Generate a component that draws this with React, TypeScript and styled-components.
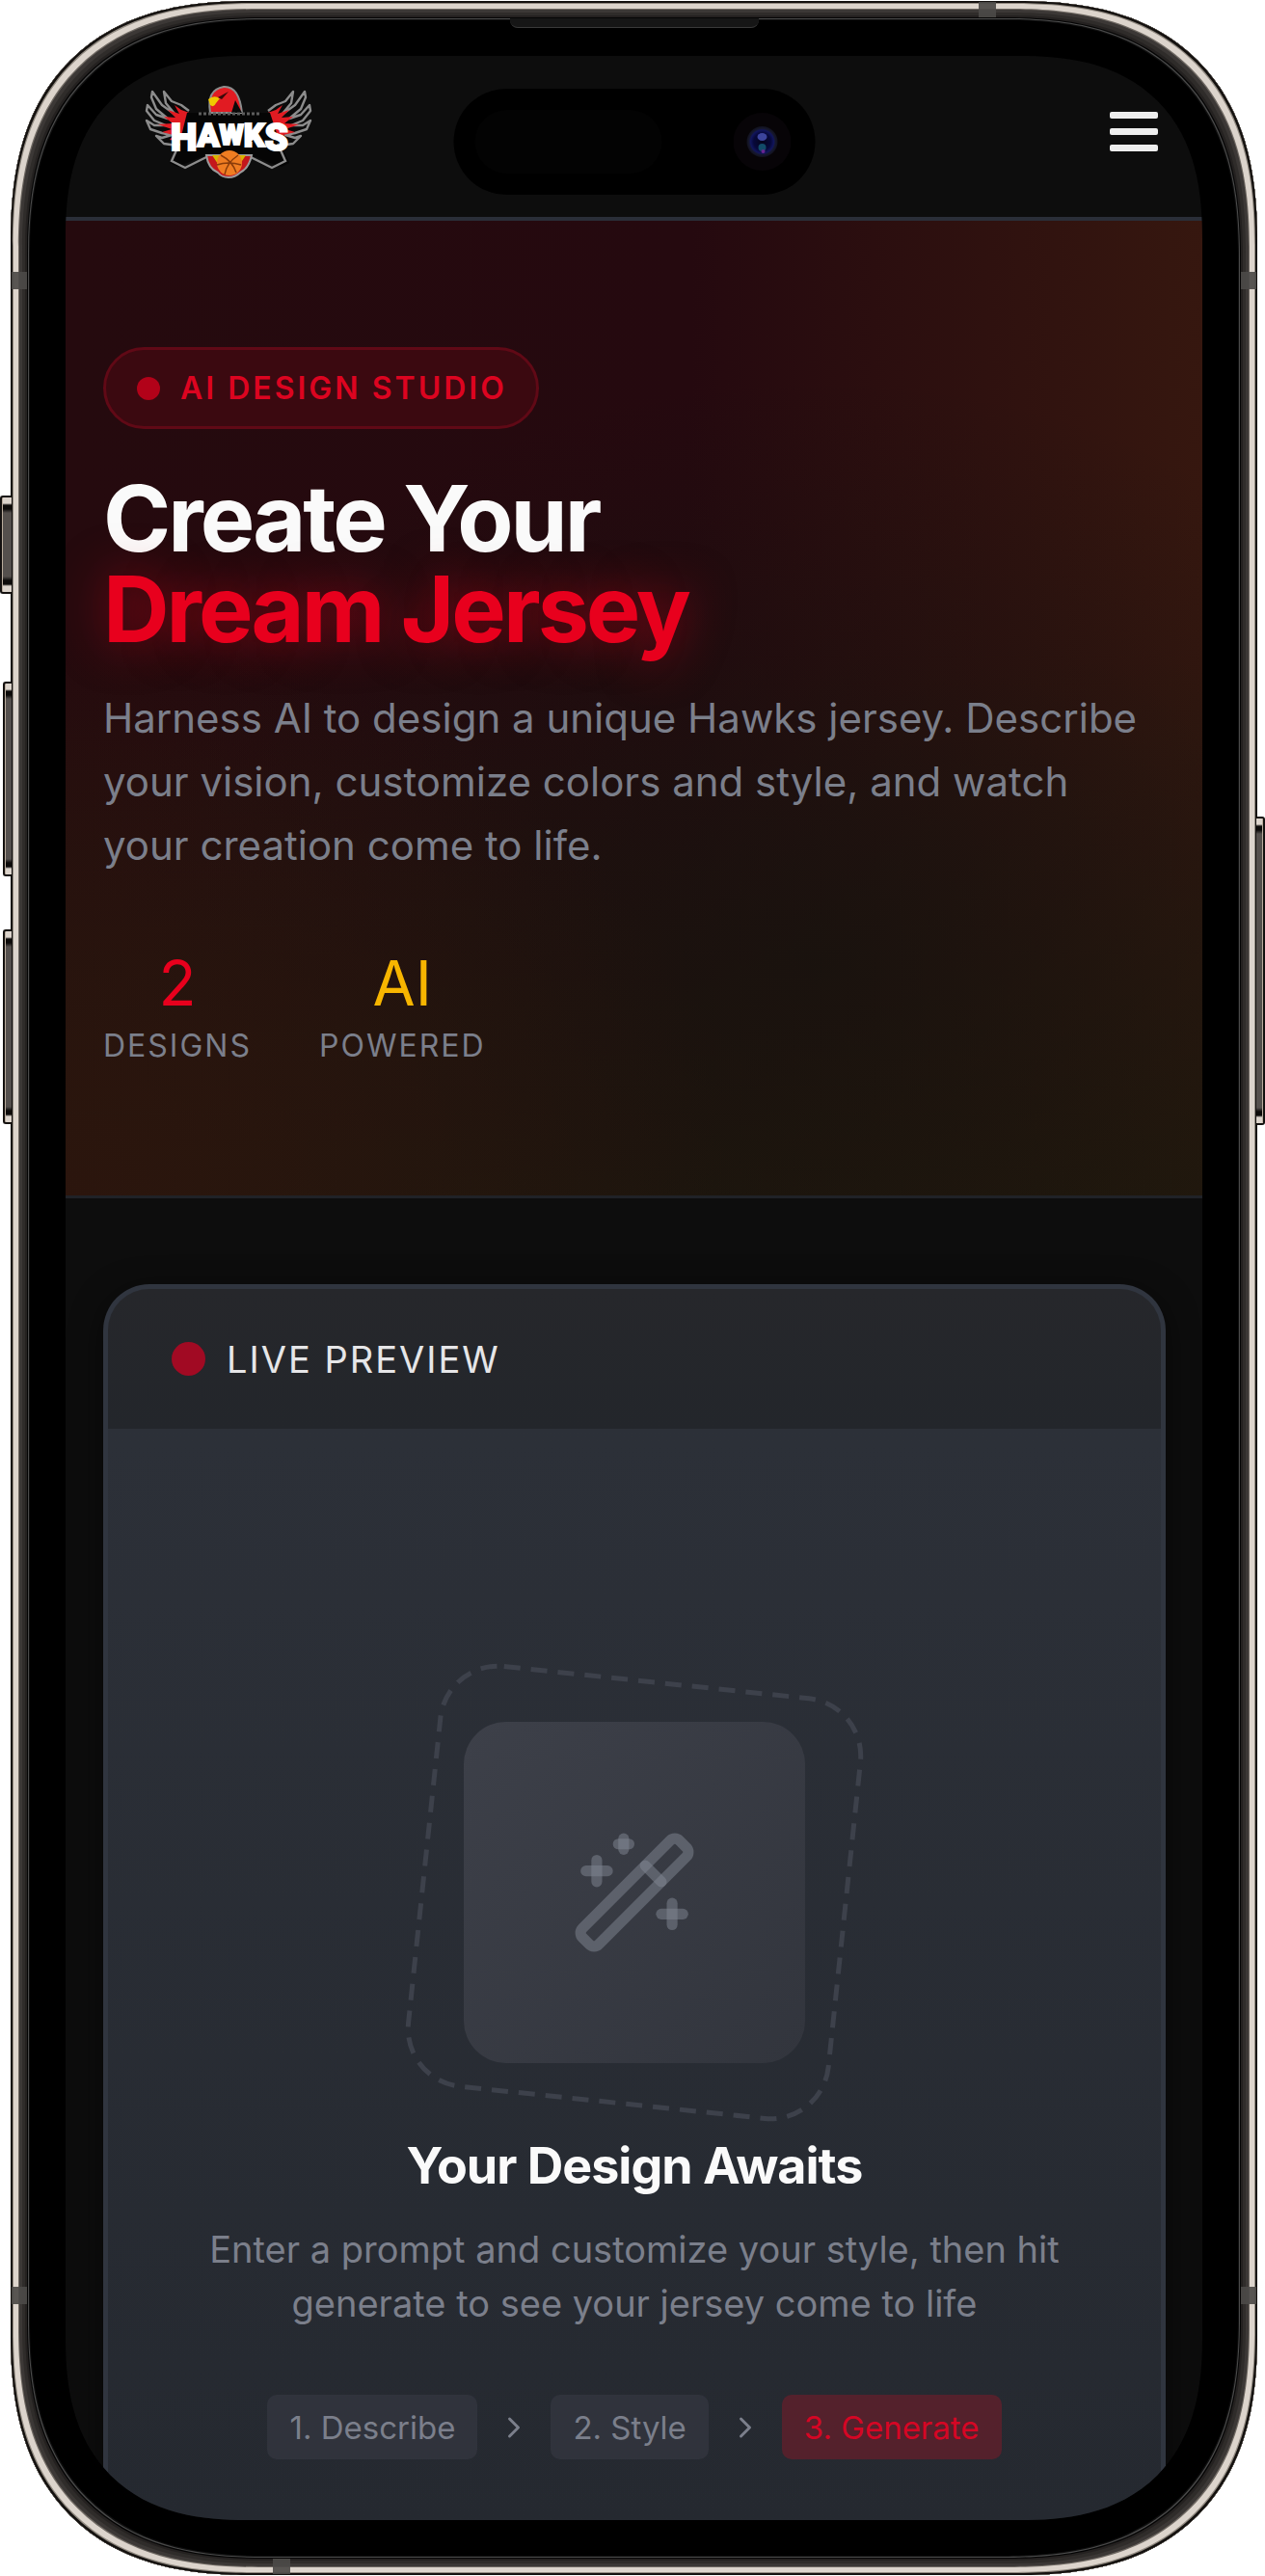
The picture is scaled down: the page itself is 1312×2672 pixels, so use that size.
import React from 'react';
import styled, { createGlobalStyle } from 'styled-components';

const GlobalStyle = createGlobalStyle`
  *, *::before, *::after { box-sizing: border-box; }
  body {
    margin: 0;
    background: #ffffff;
    font-family: Inter, "Liberation Sans", sans-serif;
    -webkit-font-smoothing: antialiased;
  }
  h1, h2, h3, p, ol { margin: 0; padding: 0; }
`;

const color = {
  bg: '#0d0d0d',
  red: '#e8001d',
  gold: '#f7b500',
  muted: '#7b7f8b',
  line: '#2a2e38',
};

/* ---------- Device shell ---------- */

const Stage = styled.div`
  padding: 1px 8px 1px 11px;
`;

const Device = styled.div`
  position: relative;
  padding: 57px;
  background: #000000;
  border-radius: 218px;
  box-shadow:
    inset 0 0 0 2px #14110f,
    inset 0 0 0 3px #8f887f,
    inset 0 0 0 8px #dcd4cc,
    inset 0 0 0 9px #6e6862,
    inset 0 0 0 12px #3c3836,
    inset 0 0 0 15px #2f2c2a,
    inset 0 0 0 17px #242120,
    inset 0 0 0 18px #050505,
    inset 0 0 0 19px #4a4a4a,
    inset 0 0 0 20px #101010;
  @supports (corner-shape: superellipse(1.3)) {
    border-radius: 252px;
    corner-shape: superellipse(1.3);
  }
`;

const Screen = styled.div`
  position: relative;
  overflow: hidden;
  background: ${color.bg};
  border-radius: 162px;
  @supports (corner-shape: superellipse(1.3)) {
    border-radius: 190px;
    corner-shape: superellipse(1.3);
  }
`;

const SideKey = styled.span<{ $side: 'left' | 'right'; $top: number; $height: number; $depth: number }>`
  position: absolute;
  ${(p) => p.$side}: ${(p) => -p.$depth}px;
  top: ${(p) => p.$top}px;
  width: ${(p) => p.$depth + 1}px;
  height: ${(p) => p.$height}px;
  border: 2px solid #14110f;
  border-${(p) => (p.$side === 'left' ? 'right' : 'left')}: 0;
  border-radius: ${(p) => (p.$side === 'left' ? '3px 0 0 3px' : '0 3px 3px 0')};
  background: linear-gradient(
    to bottom,
    #dcd4cc 0 6px, #0c0a09 8px 12px, #55504d 16px,
    #55504d calc(100% - 16px), #0c0a09 calc(100% - 12px) calc(100% - 8px), #dcd4cc calc(100% - 6px)
  );
  box-shadow: inset ${(p) => (p.$side === 'left' ? 1 : -1)}px 0 0 #b9ab9c;
`;

const Antenna = styled.span<{ $edge: 'top' | 'bottom' | 'left' | 'right'; $at: string }>`
  position: absolute;
  background: rgba(76, 74, 72, 0.92);
  ${(p) =>
    p.$edge === 'top' || p.$edge === 'bottom'
      ? `${p.$edge}: 1px; left: ${p.$at}; width: 18px; height: 16px;`
      : `${p.$edge}: 1px; top: ${p.$at}; width: 16px; height: 18px;`}
`;

const Speaker = styled.span`
  position: absolute;
  top: 18px;
  left: 50%;
  width: 258px;
  height: 10px;
  transform: translateX(-50%);
  background: #161616;
  border-bottom: 1px solid #3a3a3a;
  border-radius: 0 0 8px 8px;
`;

const Island = styled.div`
  position: absolute;
  z-index: 2;
  top: 34px;
  left: 50%;
  transform: translateX(-50%);
  display: flex;
  align-items: center;
  justify-content: space-between;
  width: 375px;
  height: 110px;
  padding: 0 25px 0 22px;
  border-radius: 55px;
  background: #000000;
`;

const Sensor = styled.span`
  width: 194px;
  height: 66px;
  border-radius: 33px;
  background: #030303;
`;

/* ---------- Top bar ---------- */

const TopBar = styled.header`
  display: flex;
  align-items: center;
  justify-content: space-between;
  padding: 29px 46px 40px 80px;
  border-bottom: 4px solid ${color.line};
`;

const LogoLink = styled.a`
  display: block;
  line-height: 0;
`;

const MenuButton = styled.button`
  display: flex;
  flex-direction: column;
  gap: 10px;
  padding: 0;
  border: 0;
  background: none;
  cursor: pointer;
`;

const MenuBar = styled.span`
  width: 50px;
  height: 7px;
  border-radius: 2px;
  background: #ededed;
`;

/* ---------- Hero ---------- */

const Hero = styled.section`
  padding: 131px 39px;
  border-bottom: 3px solid #202227;
  background:
    radial-gradient(ellipse 58% 58% at 0% 100%, rgba(44, 21, 13, 0.95), rgba(44, 21, 13, 0) 100%),
    radial-gradient(ellipse 62% 60% at 66% 76%, rgba(22, 18, 14, 0.75), rgba(22, 18, 14, 0) 100%),
    linear-gradient(to bottom, rgba(32, 26, 13, 0) 45%, rgba(32, 26, 13, 0.85) 100%),
    linear-gradient(to right, #250a0e 0%, #25090f 55%, #36170f 100%);
`;

const Badge = styled.div`
  display: flex;
  align-items: center;
  gap: 21px;
  width: fit-content;
  height: 85px;
  padding: 0 30px 0 32px;
  border: 3px solid #600916;
  border-radius: 43px;
  background: #3b0910;
  color: #dc0420;
  font-size: 32px;
  font-weight: 600;
  letter-spacing: 3px;
`;

const Dot = styled.span<{ $size: number }>`
  flex: none;
  width: ${(p) => p.$size}px;
  height: ${(p) => p.$size}px;
  border-radius: 50%;
  background: ${(p) => (p.$size > 30 ? '#a10a23' : '#b20219')};
`;

const Title = styled.h1`
  margin-top: 46px;
  color: #fafafa;
  font-size: 95px;
  line-height: 94px;
  font-weight: 700;
  letter-spacing: -3px;
`;

const Accent = styled.span`
  display: block;
  color: ${color.red};
  text-shadow: 0 0 48px rgba(232, 0, 29, 0.5);
`;

const Lead = styled.p`
  margin-top: 33px;
  color: ${color.muted};
  font-size: 42px;
  line-height: 66px;
`;

const Stats = styled.div`
  display: flex;
  gap: 70px;
  margin-top: 74px;
`;

const Stat = styled.div`
  display: flex;
  flex-direction: column;
  align-items: center;
  gap: 5px;
`;

const StatValue = styled.span<{ $color: string }>`
  color: ${(p) => p.$color};
  font-size: 64px;
  line-height: 72px;
`;

const StatLabel = styled.span`
  color: ${color.muted};
  font-size: 32px;
  line-height: 48px;
  letter-spacing: 2px;
`;

/* ---------- Preview card ---------- */

const Main = styled.main`
  padding: 89px 38px 0 39px;
`;

const Card = styled.section`
  border: 5px solid #30353f;
  border-bottom: 0;
  border-radius: 48px 48px 0 0;
  background: linear-gradient(to bottom, #2d3139, #252930);
  box-shadow: 0 8px 32px rgba(0, 0, 0, 0.5);
  overflow: hidden;
`;

const CardHeader = styled.div`
  display: flex;
  align-items: center;
  gap: 22px;
  height: 145px;
  padding: 0 66px;
  background: linear-gradient(to bottom, #26272b, #23262b);
`;

const CardTitle = styled.h2`
  color: #e6e6e8;
  font-size: 38px;
  line-height: 48px;
  font-weight: 400;
  letter-spacing: 2px;
`;

const Empty = styled.div`
  display: flex;
  flex-direction: column;
  align-items: center;
  padding: 304px 48px 63px;
  text-align: center;
`;

const WandTile = styled.div`
  position: relative;
  display: grid;
  place-items: center;
  width: 354px;
  height: 354px;
  border-radius: 44px;
  background: linear-gradient(135deg, #3d4049, #32353d);
`;

const DashedFrame = styled.svg`
  position: absolute;
  inset: -47px;
  width: 448px;
  height: 448px;
  transform: rotate(6deg);
`;

const EmptyTitle = styled.h3`
  margin-top: 75px;
  color: #fafafa;
  font-size: 52px;
  line-height: 64px;
  font-weight: 700;
  letter-spacing: -1px;
`;

const EmptyText = styled.p`
  margin-top: 26px;
  color: ${color.muted};
  font-size: 38px;
  line-height: 56px;
`;

const Steps = styled.ol`
  display: flex;
  align-items: center;
  gap: 20px;
  margin-top: 67px;
  list-style: none;
`;

const Step = styled.li<{ $active?: boolean }>`
  display: flex;
  align-items: center;
  height: 67px;
  padding: 0 23px;
  border-radius: 10px;
  background: ${(p) => (p.$active ? '#54212c' : '#30333c')};
  color: ${(p) => (p.$active ? '#d50624' : color.muted)};
  font-size: 33px;
`;

const StepArrow = styled.li`
  display: flex;
`;

/* ---------- Drawings ---------- */

const Logo = () => (
  <svg width="178" height="98" viewBox="0 0 178 98" role="img" aria-label="Hawks">
    {[undefined, 'translate(178 0) scale(-1 1)'].map((t, i) => (
      <g key={i} transform={t}>
        <path
          d="M48 28 L40 22 L30 18 L22 8 L24 20 L34 32 L20 22 L10 8 L9 14 L14 26 L26 36 L14 32 L5 22 L4 28 L12 38 L24 43 L12 43 L4 38 L8 47 L20 51 L30 53 L20 56 L14 54 L22 62 L36 64"
          fill="#0a0a0a"
          stroke="#8c8c8c"
          strokeWidth="2.4"
          strokeLinejoin="round"
        />
        <path d="M54 32 L40 27 L33 22 L38 31 L26 27 L34 35 L22 34 L31 41 L16 42 L30 47 L20 50 L32 53 L28 58 L40 60 L50 46 Z" fill="#e11b22" />
      </g>
    ))}
    <path d="M46 30 H132 L142 60 L152 82 L144 86 L132 82 L118 76 L60 76 L46 82 L36 86 L28 82 L38 62 Z" fill="#050505" />
    <path d="M38 62 L30 80 L44 87 L66 76 M140 62 L148 80 L134 87 L112 76" fill="none" stroke="#8c8c8c" strokeWidth="2.4" />
    <path d="M66 74 Q68 88 78 92 Q82 97 89 97 Q96 97 101 92 Q110 88 113 74 Z" fill="#c4161c" stroke="#9a9a9a" strokeWidth="2" />
    <path d="M72 74 l8 12 l4 -12 Z M107 74 l-8 12 l-4 -12 Z" fill="#d8b400" />
    <path d="M70 30 Q66 6 84 3 Q100 2 103 30 Z" fill="#e11b22" stroke="#8c8c8c" strokeWidth="2" />
    <path d="M96 17 L103 30 H92 Z" fill="#0a0a0a" />
    <path d="M68 16 Q74 11 80 15 L76 20 Q74 25 70 22 Z" fill="#f0c800" />
    <path d="M78 14 L89 8 L82 16 Z" fill="#3a0a0a" />
    <path d="M58 31 H122" stroke="#5c5c5c" strokeWidth="3" strokeDasharray="3 2" />
    <circle cx="90" cy="82" r="13" fill="#ef7d22" />
    <path d="M81 74 Q93 80 97 92 M99 74 Q87 82 85 94 M77 84 Q89 80 102 84" fill="none" stroke="#8a3c0a" strokeWidth="1.5" />
    <text
      x="90"
      y="69"
      textAnchor="middle"
      fontFamily='Roboto, "Liberation Sans", sans-serif'
      fontWeight="900"
      fill="#ffffff"
      stroke="#ffffff"
      strokeWidth="2"
    >
      <tspan fontSize="39">H</tspan>
      <tspan fontSize="34" dy="-4">A</tspan>
      <tspan fontSize="29" dy="-2">W</tspan>
      <tspan fontSize="34" dy="2">K</tspan>
      <tspan fontSize="39" dy="4">S</tspan>
    </text>
  </svg>
);

const Camera = () => (
  <svg width="60" height="60" viewBox="0 0 60 60" aria-hidden="true">
    <defs>
      <radialGradient id="lens">
        <stop offset="0" stopColor="#05051c" />
        <stop offset="0.55" stopColor="#07083a" />
        <stop offset="0.75" stopColor="#11155c" />
        <stop offset="0.85" stopColor="#16182e" />
        <stop offset="1" stopColor="#11111c" />
      </radialGradient>
    </defs>
    <circle cx="30" cy="30" r="30" fill="#070407" />
    <circle cx="30" cy="30" r="16" fill="url(#lens)" />
    <ellipse cx="30" cy="25" rx="5" ry="4" fill="#3c449c" />
    <ellipse cx="30" cy="36" rx="4" ry="4" fill="#124a68" />
    <circle cx="31" cy="40" r="2" fill="#6a2590" />
  </svg>
);

const Wand = () => (
  <svg
    width="134"
    height="134"
    viewBox="0 0 24 24"
    fill="none"
    stroke="rgba(130, 135, 148, 0.5)"
    strokeWidth="2"
    strokeLinecap="round"
    strokeLinejoin="round"
    aria-hidden="true"
  >
    <path d="m21.64 3.64-1.28-1.28a1.21 1.21 0 0 0-1.72 0L2.36 18.64a1.21 1.21 0 0 0 0 1.72l1.28 1.28a1.2 1.2 0 0 0 1.72 0L21.64 5.36a1.2 1.2 0 0 0 0-1.72Z" />
    <path d="m14 7 3 3" />
    <path d="M5 6v4" />
    <path d="M19 14v4" />
    <path d="M10 2v2" />
    <path d="M7 8H3" />
    <path d="M21 16h-4" />
    <path d="M11 3H9" />
  </svg>
);

const Chevron = () => (
  <svg width="36" height="36" viewBox="0 0 24 24" fill="none" stroke={color.muted} strokeWidth="2" strokeLinecap="round" strokeLinejoin="round" aria-hidden="true">
    <path d="m9 18 6-6-6-6" />
  </svg>
);

export default function App() {
  return (
    <>
      <GlobalStyle />
      <Stage>
        <Device>
          <SideKey $side="left" $top={513} $height={102} $depth={11} />
          <SideKey $side="left" $top={706} $height={202} $depth={8} />
          <SideKey $side="left" $top={963} $height={202} $depth={8} />
          <SideKey $side="right" $top={846} $height={320} $depth={8} />
          <Antenna $edge="top" $at="1004px" />
          <Antenna $edge="bottom" $at="272px" />
          <Antenna $edge="left" $at="281px" />
          <Antenna $edge="right" $at="281px" />
          <Antenna $edge="left" $at="2371px" />
          <Antenna $edge="right" $at="2371px" />
          <Speaker />
          <Screen>
            <Island>
              <Sensor />
              <Camera />
            </Island>
            <TopBar>
              <LogoLink href="#">
                <Logo />
              </LogoLink>
              <MenuButton type="button" aria-label="Open menu">
                <MenuBar />
                <MenuBar />
                <MenuBar />
              </MenuButton>
            </TopBar>
            <Hero>
              <Badge>
                <Dot $size={24} />
                AI DESIGN STUDIO
              </Badge>
              <Title>
                Create Your
                <Accent>Dream Jersey</Accent>
              </Title>
              <Lead>
                Harness AI to design a unique Hawks jersey. Describe your vision, customize colors and style, and watch
                your creation come to life.
              </Lead>
              <Stats>
                <Stat>
                  <StatValue $color={color.red}>2</StatValue>
                  <StatLabel>DESIGNS</StatLabel>
                </Stat>
                <Stat>
                  <StatValue $color={color.gold}>AI</StatValue>
                  <StatLabel>POWERED</StatLabel>
                </Stat>
              </Stats>
            </Hero>
            <Main>
              <Card>
                <CardHeader>
                  <Dot $size={35} />
                  <CardTitle>LIVE PREVIEW</CardTitle>
                </CardHeader>
                <Empty>
                  <WandTile>
                    <DashedFrame viewBox="0 0 448 448" fill="none" aria-hidden="true">
                      <rect x="5" y="5" width="438" height="438" rx="60" stroke="#3d414b" strokeWidth="5" strokeDasharray="17 11" />
                    </DashedFrame>
                    <Wand />
                  </WandTile>
                  <EmptyTitle>Your Design Awaits</EmptyTitle>
                  <EmptyText>
                    Enter a prompt and customize your style, then hit
                    <br />
                    generate to see your jersey come to life
                  </EmptyText>
                  <Steps>
                    <Step>1. Describe</Step>
                    <StepArrow aria-hidden="true">
                      <Chevron />
                    </StepArrow>
                    <Step>2. Style</Step>
                    <StepArrow aria-hidden="true">
                      <Chevron />
                    </StepArrow>
                    <Step $active>3. Generate</Step>
                  </Steps>
                </Empty>
              </Card>
            </Main>
          </Screen>
        </Device>
      </Stage>
    </>
  );
}
